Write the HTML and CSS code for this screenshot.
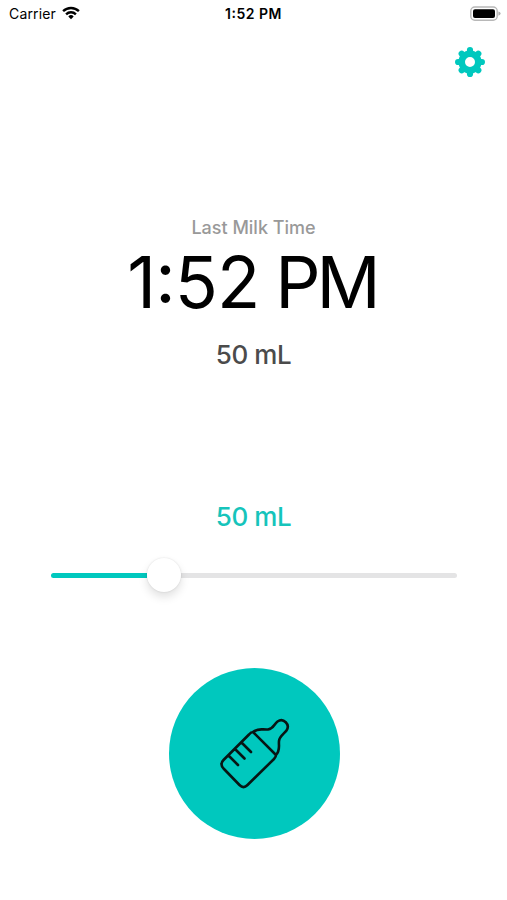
FILE: index.html
```
<!DOCTYPE html>
<html lang="en">
<head>
<meta charset="utf-8">
<title>Milk Time</title>
<link rel="stylesheet" href="styles.css">
</head>
<body>
<div class="screen">
  <header class="status">
    <div class="carrier"><span class="carrier-name">Carrier</span>
      <svg class="wifi" viewBox="0 0 18 14" width="18" height="14"><path d="M9 13.2 6.3 10.4a3.9 3.9 0 0 1 5.4 0Z"/><path class="arc" d="M4.1 8.3a7 7 0 0 1 9.8 0M1.1 5.2a11.3 11.3 0 0 1 15.8 0"/></svg>
    </div>
    <div class="clock">1<span class="colon">:</span>52 PM</div>
    <div class="power">
      <svg viewBox="0 0 31 16" width="31" height="16"><rect x=".8" y="1" width="26.4" height="13.2" rx="4" fill="#fff" stroke="#b8b8b8" stroke-width="1.4"/><rect x="3" y="3.2" width="22" height="8.8" rx="2"/><path d="M28.4 5.4q2.2.6 2.2 2.2t-2.2 2.2Z" fill="#b0b0b0"/></svg>
    </div>
  </header>
  <nav class="toolbar">
    <button class="settings" aria-label="Settings">
      <svg viewBox="-15 -15 30 30" width="30" height="30">
        <g stroke="#00c8be" stroke-width="6.2" stroke-linecap="round"><path d="M0-11.9V-9M0 11.9V9M-11.9 0H-9M11.9 0H9M-8.3-8.3l2 2M8.3-8.3l-2 2M-8.3 8.3l2-2M8.3 8.3l-2-2"/></g>
        <circle r="8.3" fill="none" stroke="#00c8be" stroke-width="6.6"/>
      </svg>
    </button>
  </nav>
  <main>
    <p class="label">Last Milk Time</p>
    <h1 class="time">1<span class="colon">:</span>52 <span class="period">PM</span></h1>
    <p class="amount last">50 mL</p>
    <p class="amount selected">50 mL</p>
    <div class="slider"><div class="filled"></div><div class="thumb"></div><div class="rest"></div></div>
    <button class="feed" aria-label="Add milk">
      <svg class="bottle" viewBox="0 0 90 90" width="90" height="90">
        <path d="M43 22 66 45M43 22Q41 22 39 24.5L13.5 50Q9.5 54 13.5 58.5L29.5 75Q33.5 79 37.5 75L64 49Q66 47 66 45M43 22C49 17.5 52 20 58 19.5C64 18.5 64 14 67.5 11.5C73.5 7.5 80.5 14.5 76.5 20.5C74.5 23.5 69.5 26 69 31C68.5 36 70.5 40 66 45M19.5 46.5 28 55M26 40 34.5 48.5M32.5 33.5 41 42"/>
      </svg>
    </button>
  </main>
</div>
</body>
</html>
```
FILE: styles.css
```
* { box-sizing: border-box; }
body { margin: 0; background: #fff; color: #000; font-family: Inter, sans-serif; }
button { border: 0; padding: 0; }
.screen { width: 507px; height: 900px; overflow: hidden; display: flex; flex-direction: column; }
.status { height: 28px; padding: 0 6px 0 9px; display: grid; grid-template-columns: 1fr auto 1fr; align-items: center; flex: none; }
.carrier { display: flex; align-items: center; gap: 6px; font-size: 14px; line-height: 28px; }
.carrier-name { width: 47px; white-space: nowrap; letter-spacing: .15px; }
.wifi { margin-top: -2px; }
.arc { fill: none; stroke: #000; stroke-width: 2.4; }
.clock { margin-right: 3px; font-size: 14px; font-weight: 600; line-height: 28px; letter-spacing: .5px; }
.colon { vertical-align: .07em; line-height: 0; }
.power { display: flex; justify-content: flex-end; margin-top: -1px; }
.toolbar { height: 68px; padding: 19px 22px 0 0; display: flex; justify-content: flex-end; align-items: flex-start; flex: none; }
.settings { width: 30px; height: 30px; background: none; }
.settings svg { display: block; }
main { padding-top: 120px; display: flex; flex-direction: column; align-items: center; }
.label, .time, .amount { margin: 0; white-space: nowrap; }
.label { height: 24px; line-height: 24px; font-size: 18px; font-weight: 500; color: #999; }
.time { height: 86px; line-height: 85px; margin-right: 3px; font-size: 71px; font-weight: 400; letter-spacing: -1px; word-spacing: -3px; }
.period { letter-spacing: -4px; }
.amount { height: 32px; line-height: 32px; font-size: 26px; font-weight: 500; letter-spacing: -.4px; }
.last { margin-top: 13px; color: #4b4b4b; }
.selected { margin-top: 130px; color: #16c4bb; }
.slider { margin-top: 25px; width: 406px; height: 34px; display: flex; align-items: center; }
.filled { width: 96px; height: 5px; margin-top: 1px; border-radius: 3px 0 0 3px; background: #00c8be; }
.thumb { width: 34px; height: 34px; border-radius: 50%; background: #fff; box-shadow: 0 5px 10px rgba(0,0,0,.12), 0 0 2px rgba(0,0,0,.13); position: relative; }
.rest { flex: 1; height: 5px; margin-top: 1px; border-radius: 0 3px 3px 0; background: #e4e4e5; }
.feed { margin: 76px 0 0 1px; width: 171px; height: 171px; border-radius: 50%; background: #00c8be; display: flex; align-items: center; justify-content: center; }
.bottle { display: block; margin: 3px 0 0 1px; fill: none; stroke: #071514; stroke-width: 2.6; stroke-linecap: round; stroke-linejoin: round; }
```
